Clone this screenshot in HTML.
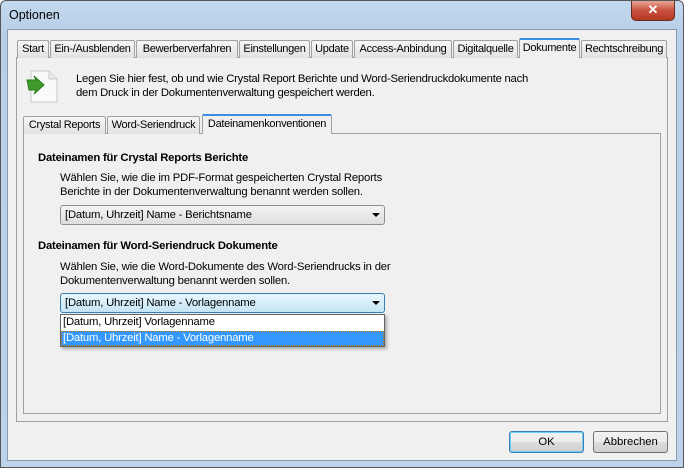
<!DOCTYPE html><html><head><style>
*{box-sizing:border-box;margin:0;padding:0}
body{width:684px;height:468px;overflow:hidden;font-family:"Liberation Sans",sans-serif;font-size:11.3px;color:#000;background:#fff}
.win{position:absolute;left:0;top:0;width:684px;height:468px;border:1px solid #555;border-radius:6px 6px 0 0;background:linear-gradient(180deg,#c4d9ee 0,#b7cfe8 30px,#bcd3ea 100%)}
.title{position:absolute;left:8px;top:7px;font-size:12.5px}
.close{position:absolute;left:630px;top:0;width:44px;height:20px;border:1px solid #6b2a20;border-top:none;border-radius:0 0 5px 5px;background:linear-gradient(#e8a596,#c9503c 50%,#b23a22);color:#fff;text-align:center;font-weight:bold;font-size:13px;line-height:18px}
.client{position:absolute;left:7px;top:29px;width:670px;height:432px;background:#f0f0f0;border:1px solid #8a9bb0}
.abs{position:absolute}
.panel{position:absolute;border:1px solid #a0a0a0;background:#f0f0f0}
.tab{position:absolute;height:18px;border:1px solid #a0a0a0;border-bottom:none;background:linear-gradient(#f6f6f6,#e2e2e2);padding:2px 0 0;text-align:center;white-space:nowrap;border-radius:2px 2px 0 0;font-size:11px;letter-spacing:-0.3px;overflow:hidden}
.tab.sel{background:#f0f0f0;height:20px;border-top:2px solid #3a8ee6}
.combo{position:absolute;height:20px;border:1px solid #8e8f8f;border-radius:3px;background:linear-gradient(#f4f4f4,#dedede);padding:3px 4px;white-space:nowrap;letter-spacing:-0.2px}
.arr{position:absolute;right:4px;top:7px;width:0;height:0;border-left:4px solid transparent;border-right:4px solid transparent;border-top:4px solid #000}
.btn{position:absolute;height:22px;border:1px solid #707070;border-radius:3px;background:linear-gradient(#f2f2f2,#ebebeb 50%,#dcdcdc 51%,#cfcfcf);text-align:center;line-height:20px}
b{font-weight:bold}
</style></head><body>
<div class="win">
<div class="title">Optionen</div>
<div class="close">✕</div>
</div>
<div class="client"></div>
<div class="panel" style="left:16px;top:57px;width:652px;height:365px"></div>
<div class="tab" style="left:17px;top:40px;width:32px">Start</div>
<div class="tab" style="left:50px;top:40px;width:85px">Ein-/Ausblenden</div>
<div class="tab" style="left:136px;top:40px;width:102px">Bewerberverfahren</div>
<div class="tab" style="left:239px;top:40px;width:71px">Einstellungen</div>
<div class="tab" style="left:311px;top:40px;width:42px">Update</div>
<div class="tab" style="left:354px;top:40px;width:98px">Access-Anbindung</div>
<div class="tab" style="left:453px;top:40px;width:65px">Digitalquelle</div>
<div class="tab sel" style="left:519px;top:38px;width:61px">Dokumente</div>
<div class="tab" style="left:581px;top:40px;width:86px">Rechtschreibung</div>
<svg class="abs" style="left:25px;top:70px" width="36" height="34" viewBox="0 0 36 34">
<path d="M6 1h18l8 8v23H6z" fill="#fafafa" stroke="#c8c8c8"/>
<path d="M24 1v8h8" fill="#e8e8e8" stroke="#c8c8c8"/>
<path d="M2 10l9 0 -2-4 10 9 -10 9 2-4 -7 0 z" fill="#3e9a2a" stroke="#2c7a1c"/>
</svg>
<div class="abs" style="left:76px;top:72px;line-height:14px;width:470px;letter-spacing:-0.25px">Legen Sie hier fest, ob und wie Crystal Report Berichte und Word-Seriendruckdokumente nach<br>dem Druck in der Dokumentenverwaltung gespeichert werden.</div>
<div class="panel" style="left:23px;top:133px;width:638px;height:281px"></div>
<div class="tab" style="left:23px;top:116px;width:83px">Crystal Reports</div>
<div class="tab" style="left:107px;top:116px;width:93px">Word-Seriendruck</div>
<div class="tab sel" style="left:202px;top:114px;width:130px">Dateinamenkonventionen</div>
<div class="abs" style="left:38px;top:152px;letter-spacing:-0.2px"><b>Dateinamen für Crystal Reports Berichte</b></div>
<div class="abs" style="left:60px;top:171px;line-height:14px;letter-spacing:-0.2px">Wählen Sie, wie die im PDF-Format gespeicherten Crystal Reports<br>Berichte in der Dokumentenverwaltung benannt werden sollen.</div>
<div class="combo" style="left:60px;top:205px;width:325px">[Datum, Uhrzeit] Name - Berichtsname<span class="arr"></span></div>
<div class="abs" style="left:38px;top:240px;letter-spacing:-0.2px"><b>Dateinamen für Word-Seriendruck Dokumente</b></div>
<div class="abs" style="left:60px;top:260px;line-height:14px;letter-spacing:-0.2px">Wählen Sie, wie die Word-Dokumente des Word-Seriendrucks in der<br>Dokumentenverwaltung benannt werden sollen.</div>
<div class="combo" style="left:60px;top:293px;width:325px;border-color:#3c7fb1;background:linear-gradient(#eaf6fd,#c4e5f6)">[Datum, Uhrzeit] Name - Vorlagenname<span class="arr"></span></div>
<div class="abs" style="left:60px;top:314px;width:325px;height:33px;border:1px solid #646464;background:#fff;box-shadow:2px 2px 3px rgba(0,0,0,.3);letter-spacing:-0.2px">
<div style="padding:1px 2px;height:16px">[Datum, Uhrzeit] Vorlagenname</div>
<div style="padding:1px 2px;height:15px;background:#3399ff;color:#fff;outline:1px dotted #c07000;outline-offset:-1px">[Datum, Uhrzeit] Name - Vorlagenname</div>
</div>
<div class="btn" style="left:509px;top:431px;width:75px;border-color:#3c7fb1;box-shadow:inset 0 0 0 1px #6fd0f6">OK</div>
<div class="btn" style="left:593px;top:431px;width:75px">Abbrechen</div>
</body></html>
